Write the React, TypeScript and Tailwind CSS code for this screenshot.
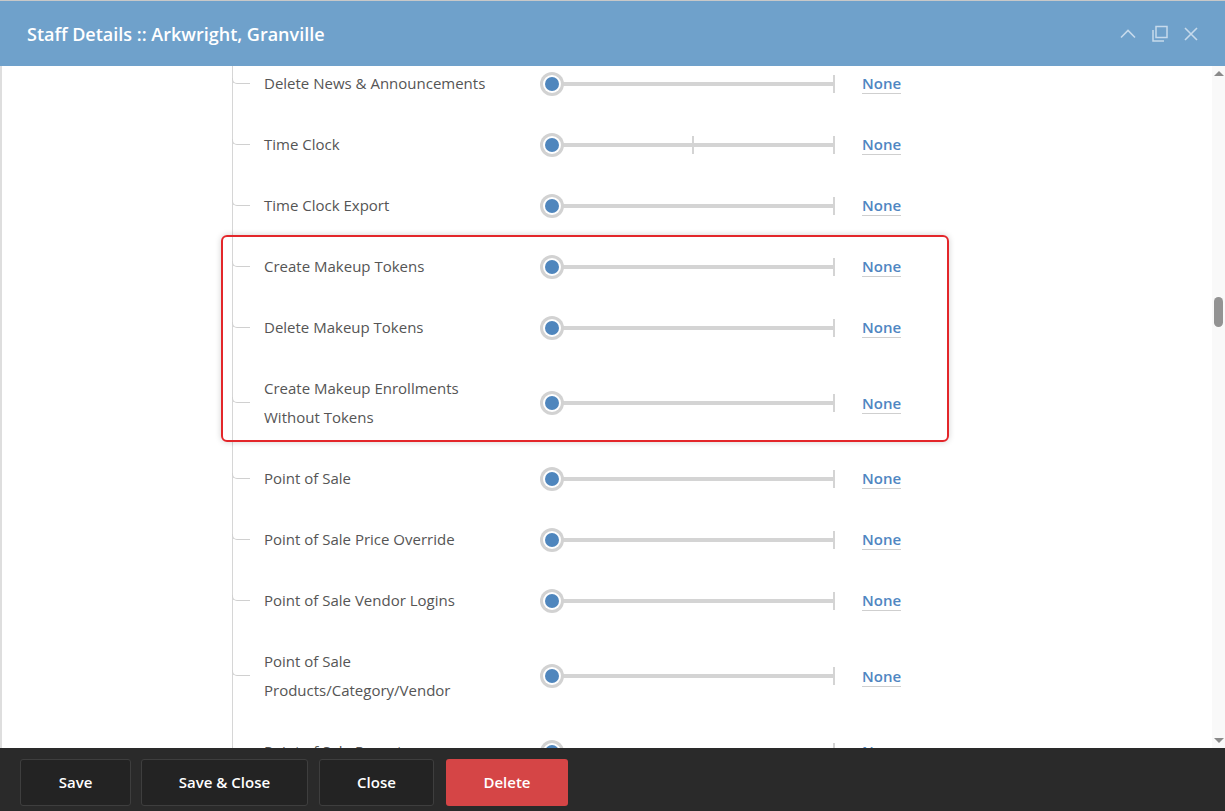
import React from "react";

type Row = { label: string[]; mid?: boolean };

const rows: Row[] = [
  { label: ["Delete News & Announcements"] },
  { label: ["Time Clock"], mid: true },
  { label: ["Time Clock Export"] },
  { label: ["Create Makeup Tokens"] },
  { label: ["Delete Makeup Tokens"] },
  { label: ["Create Makeup Enrollments", "Without Tokens"] },
  { label: ["Point of Sale"] },
  { label: ["Point of Sale Price Override"] },
  { label: ["Point of Sale Vendor Logins"] },
  { label: ["Point of Sale", "Products/Category/Vendor"] },
  { label: ["Point of Sale Reports"] },
];

function Slider({ mid }: { mid?: boolean }) {
  return (
    <div className="relative w-[298px] h-6 flex items-center">
      <div className="absolute left-3 right-[4px] h-[4px] bg-[#d4d4d4]" />
      {mid && <div className="absolute left-[152px] w-[2px] h-[18px] bg-[#d4d4d4]" />}
      <div className="absolute left-[293px] w-[2px] h-[18px] bg-[#d4d4d4]" />
      <div className="relative w-6 h-6 rounded-full bg-[#d2d2d2] flex items-center justify-center">
        <div className="w-[18px] h-[18px] rounded-full bg-white flex items-center justify-center">
          <div className="w-[14px] h-[14px] rounded-full bg-[#4f86bd]" />
        </div>
      </div>
    </div>
  );
}

function PermissionRow({ row }: { row: Row }) {
  return (
    <div className="flex items-center py-4">
      <div className="w-[18px] h-[6px] -mt-[6px] border-l border-b border-[#d0d0d0] rounded-bl-[5px] -ml-px" />
      <div className="w-[290px] pl-[14px] text-[15px] leading-[29px] text-[#555]">
        {row.label.map((l) => (
          <div key={l}>{l}</div>
        ))}
      </div>
      <Slider mid={row.mid} />
      <a className="ml-[24px] text-[15px] font-semibold text-[#4f86c2] leading-[20px] border-b border-[#cfcfcf]">
        None
      </a>
    </div>
  );
}

export default function App() {
  return (
    <div
      className="w-[1225px] h-[811px] flex flex-col bg-white overflow-hidden relative"
      style={{ fontFamily: '"Open Sans", "Noto Sans", sans-serif' }}
    >
      {/* header */}
      <div className="h-[66px] shrink-0 bg-[#6fa1cb] border-t border-[#c8c8c8] flex items-center pl-[27px] pr-[26px]">
        <h1 className="text-white text-[18px] font-semibold mt-[1px]">Staff Details :: Arkwright, Granville</h1>
        <div className="ml-auto flex items-center gap-[14px] text-[#c6daec]">
          <svg width="18" height="18" viewBox="0 0 18 18" fill="none" stroke="currentColor" strokeWidth="1.6">
            <path d="M2 12.5 L9 5.5 L16 12.5" />
          </svg>
          <svg width="18" height="18" viewBox="0 0 18 18" fill="none" stroke="currentColor" strokeWidth="1.5">
            <rect x="5" y="1.5" width="11" height="11" />
            <path d="M2 5 V16 H13" />
          </svg>
          <svg width="16" height="16" viewBox="0 0 16 16" fill="none" stroke="currentColor" strokeWidth="1.6">
            <path d="M2 2 L14 14 M14 2 L2 14" />
          </svg>
        </div>
      </div>

      {/* body */}
      <div className="flex-1 flex min-h-0 border-l-2 border-[#dedede]">
        <div className="flex-1 flex min-h-0 overflow-hidden">
          <div className="w-[230px] shrink-0" />
          <div className="border-l border-[#d6d6d6] -mt-[13px]">
            {rows.map((r, i) => (
              <PermissionRow key={i} row={r} />
            ))}
          </div>
        </div>
        {/* scrollbar */}
        <div className="w-[13px] shrink-0 bg-[#f9f9f9] flex flex-col items-center py-[5px]">
          <div className="w-0 h-0 border-l-[5px] border-r-[5px] border-b-[5px] border-l-transparent border-r-transparent border-b-[#8a8a8a]" />
          <div className="mt-[221px] w-[9px] h-[30px] rounded-full bg-[#939393]" />
          <div className="mt-auto w-0 h-0 border-l-[5px] border-r-[5px] border-t-[5px] border-l-transparent border-r-transparent border-t-[#8a8a8a]" />
        </div>
      </div>

      {/* footer */}
      <div className="h-[63px] shrink-0 bg-[#2a2a2a] flex items-start pt-[11px] pl-[20px]">
        <button className="h-[47px] w-[111px] rounded-[3px] border border-[#3e3e3e] bg-[#232323] text-white text-[15px] font-semibold">
          Save
        </button>
        <button className="ml-[10px] h-[47px] w-[167px] rounded-[3px] border border-[#3e3e3e] bg-[#232323] text-white text-[15px] font-semibold">
          Save &amp; Close
        </button>
        <button className="ml-[11px] h-[47px] w-[115px] rounded-[3px] border border-[#3e3e3e] bg-[#232323] text-white text-[15px] font-semibold">
          Close
        </button>
        <button className="ml-[12px] h-[47px] w-[122px] rounded-[3px] bg-[#d54546] text-white text-[15px] font-semibold">
          Delete
        </button>
      </div>

      {/* highlight annotation */}
      <div className="absolute left-[221px] top-[235px] w-[728px] h-[207px] rounded-[6px] border-2 border-[#e3262a] shadow-[0_0_6px_rgba(0,0,0,0.18)] pointer-events-none" />
    </div>
  );
}
